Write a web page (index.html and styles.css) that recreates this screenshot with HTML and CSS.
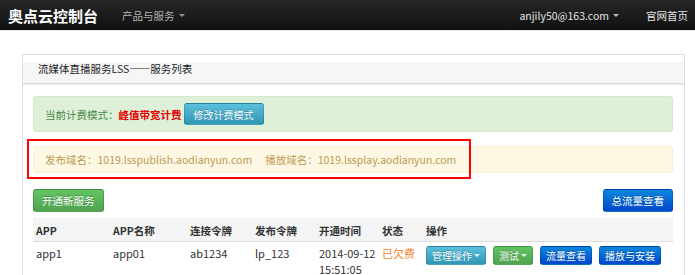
FILE: index.html
```html
<!DOCTYPE html>
<html lang="zh-CN">
<head>
    <meta charset="UTF-8">
    <title>奥点云控制台</title>
    <link rel="stylesheet" href="styles.css">
</head>
<body>
    <div class="navbar">
        <span class="brand">奥点云控制台</span>
        <span class="nav-link dim">产品与服务 <span class="caret"></span></span>
        <span class="nav-right">
            <span class="nav-link">anjily50@163.com <span class="caret"></span></span>
            <span class="nav-link">官网首页</span>
        </span>
    </div>

    <div class="page">
        <div class="panel">
            <div class="panel-heading">流媒体直播服务LSS——服务列表</div>
            <div class="panel-body">
                <div class="alert alert-success">
                    当前计费模式：<b class="mode">峰值带宽计费</b>
                    <button class="btn btn-info">修改计费模式</button>
                </div>

                <div class="alert alert-warning">
                    发布域名：1019.lsspublish.aodianyun.com<span class="spacer"></span>播放域名：1019.lssplay.aodianyun.com
                </div>

                <div class="toolbar">
                    <button class="btn btn-success">开通新服务</button>
                    <button class="btn btn-primary">总流量查看</button>
                </div>

                <table class="table">
                    <thead>
                        <tr>
                            <th class="c-app">APP</th>
                            <th class="c-name">APP名称</th>
                            <th class="c-conn">连接令牌</th>
                            <th class="c-pub">发布令牌</th>
                            <th class="c-time">开通时间</th>
                            <th class="c-state">状态</th>
                            <th>操作</th>
                        </tr>
                    </thead>
                    <tbody>
                        <tr>
                            <td>app1</td>
                            <td>app01</td>
                            <td>ab1234</td>
                            <td>lp_123</td>
                            <td class="date">2014-09-12<br>15:51:05</td>
                            <td class="owed">已欠费</td>
                            <td class="ops">
                                <button class="btn btn-sm btn-info">管理操作<span class="caret"></span></button>
                                <button class="btn btn-sm btn-success">测试<span class="caret"></span></button>
                                <button class="btn btn-sm btn-primary">流量查看</button>
                                <button class="btn btn-sm btn-primary">播放与安装</button>
                            </td>
                        </tr>
                    </tbody>
                </table>
            </div>

            <!-- annotation drawn over the domain alert -->
            <div class="mark"></div>
        </div>
    </div>
</body>
</html>
```

FILE: styles.css
```css
body {
    margin: 0;
    background: #fff;
    color: #333;
    font-family: "Noto Sans CJK SC", "Noto Sans", sans-serif;
    font-size: 10.5px;
}

/* top bar */
.navbar {
    height: 30px;
    background: linear-gradient(#262626, #111);
    border-bottom: 1px solid #e8e8e8;
    display: flex;
    align-items: center;
    padding: 0 7px 0 8px;
    color: #ddd;
}

.brand {
    color: #fff;
    font-size: 15px;
    font-weight: bold;
    margin-right: 24px;
}

.nav-link {
    font-size: 10.5px;
    color: #e4e4e4;
    display: flex;
    align-items: center;
    gap: 4px;
}

.nav-link.dim {
    color: #b4b4b4;
}

.nav-right {
    margin-left: auto;
    display: flex;
    gap: 27px;
}

.caret {
    display: inline-block;
    width: 0;
    height: 0;
    border-left: 3px solid transparent;
    border-right: 3px solid transparent;
    border-top: 3px solid currentColor;
    opacity: 0.8;
}

/* panel */
.page {
    padding: 23px 10px 0 22px;
}

.panel {
    position: relative;
    border: 1px solid #ddd;
    border-bottom: none;
}

.panel-heading {
    height: 28px;
    line-height: 28px;
    padding-left: 15px;
    background: linear-gradient(#fff 0, #fff 7px, #f6f6f6 7px);
    border-bottom: 1px solid #ddd;
    box-shadow: 0 1px 1px #eee;
    color: #222;
}

.panel-body {
    padding: 12px 11px 0 10px;
}

.alert {
    border-radius: 3px;
    border: 1px solid transparent;
    padding: 0 11px;
    display: flex;
    align-items: center;
}

.alert-success {
    height: 34px;
    background: #dff0d8;
    border-color: #d6e9c6;
    color: #468847;
    margin-bottom: 14px;
}

.mode {
    color: #e30000;
}

.alert-success .btn {
    margin-left: 2px;
}

.alert-warning {
    height: 25px;
    background: #fcf8e3;
    border-color: #fbeed5;
    color: #c09853;
    margin-bottom: 16px;
}

.spacer {
    display: inline-block;
    width: 13px;
}

.toolbar {
    display: flex;
    justify-content: space-between;
    margin-bottom: 6px;
}

/* buttons */
.btn {
    font-family: inherit;
    font-size: 10px;
    color: #fff;
    height: 22px;
    padding: 0 9px;
    border-radius: 3px;
    border: 1px solid rgba(0, 0, 0, 0.15);
    text-shadow: 0 -1px 0 rgba(0, 0, 0, 0.25);
    cursor: pointer;
    display: inline-flex;
    align-items: center;
    gap: 2px;
}

.btn-info {
    background: linear-gradient(#5bc0de, #2f96b4);
}

.btn-success {
    background: linear-gradient(#62c462, #51a351);
}

.btn-primary {
    background: linear-gradient(#0a88dc, #0046cc);
}

.btn-sm {
    font-size: 10px;
    height: 19px;
    padding: 0 5px;
}

.toolbar .btn {
    font-size: 10.5px;
    height: 23px;
    padding: 0 8px;
}

/* table */
.table {
    width: 100%;
    border-collapse: collapse;
}

.table th {
    text-align: left;
    font-weight: bold;
    background: #f4f4f4;
    border-top: 1px solid #eee;
    border-bottom: 1px solid #ddd;
    height: 22px;
    padding: 0 3px;
}

.table td {
    vertical-align: top;
    padding: 4px 3px 0;
    line-height: 15px;
    font-size: 11px;
    white-space: nowrap;
}

.c-app { width: 71px; }
.c-name { width: 71px; }
.c-conn { width: 59px; }
.c-pub { width: 58px; }
.c-time { width: 57px; }
.c-state { width: 38px; }

.table td.date {
    line-height: 16px;
    padding-top: 3px;
}

.owed {
    color: #fb7a2c;
}

.table td.ops {
    padding-top: 4px;
    display: flex;
    gap: 7px;
}

/* red annotation box */
.mark {
    position: absolute;
    left: 4px;
    top: 84px;
    width: 440px;
    height: 36px;
    border: 2px solid #f00;
}
```
